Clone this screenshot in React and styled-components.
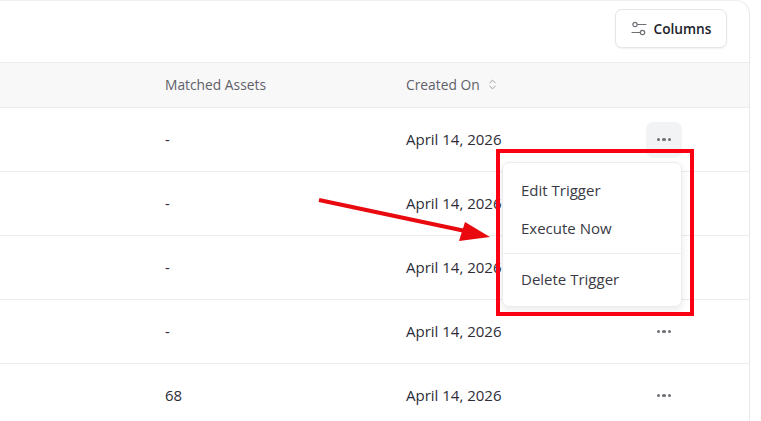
import React from "react";
import styled, { createGlobalStyle } from "styled-components";
import { ChevronsUpDown } from "lucide-react";

const GlobalStyle = createGlobalStyle`
  html, body {
    margin: 0;
    background: #fff;
    overflow: hidden;
  }
  body {
    font-family: "Open Sans", "Noto Sans", "Liberation Sans", sans-serif;
  }
`;

const Page = styled.div`
  position: relative;
  width: 761px;
  height: 421px;
  overflow: hidden;
`;

//Table card, cut off by the window on the left and bottom
const Card = styled.div`
  box-sizing: border-box;
  width: 750px;
  height: 421px;
  background: #fff;
  border-right: 1px solid #e9e9eb;
  border-top-right-radius: 14px;
  box-shadow: inset 0 1px 0 #f0f0f1;
`;

const Toolbar = styled.div`
  box-sizing: border-box;
  height: 63px;
  display: flex;
  justify-content: flex-end;
  align-items: flex-start;
  padding: 9px 22px 0 0;
  border-bottom: 1px solid #ececee;
`;

const ColumnsButton = styled.button`
  box-sizing: border-box;
  width: 112px;
  height: 39px;
  display: flex;
  align-items: center;
  justify-content: center;
  gap: 7px;
  background: #fff;
  border: 1px solid #e6e6e8;
  border-radius: 7px;
  box-shadow: 0 1px 2px rgba(20, 20, 30, 0.06);
  color: #1d1d2b;
  font: 600 13.7px "Open Sans", sans-serif;
  padding: 0;
`;

const Row = styled.div`
  box-sizing: border-box;
  display: grid;
  grid-template-columns: 165px 241px 1fr 102px;
  align-items: center;
  height: ${(props) => (props.$header ? "45px" : "64px")};
  background: ${(props) => (props.$header ? "#f8f8f9" : "#fff")};
  border-bottom: 1px solid #ececee;
`;

const Cell = styled.div`
  grid-column: ${(props) => props.$col};
  padding-bottom: 2px;
  color: #2d2d39;
  font-size: 15px;
  white-space: nowrap;
`;

const HeadCell = styled(Cell)`
  display: flex;
  align-items: center;
  gap: 6px;
  color: #5f6068;
  font-size: 13.8px;
`;

const ActionButton = styled.div`
  width: 36px;
  height: 36px;
  margin-left: -1px;
  display: flex;
  align-items: center;
  justify-content: center;
  gap: 2px;
  border-radius: 7px;
  background: ${(props) => (props.$active ? "#f2f3f5" : "transparent")};
`;

const Dot = styled.span`
  width: 3.5px;
  height: 3.5px;
  border-radius: 50%;
  background: #6d6e75;
`;

//Open row menu
const Menu = styled.div`
  position: absolute;
  left: 502px;
  top: 162px;
  box-sizing: border-box;
  width: 180px;
  height: 145px;
  padding-top: 8px;
  background: #fff;
  border: 1px solid #ececee;
  border-radius: 7px;
  box-shadow: 0 3px 8px rgba(20, 20, 30, 0.09);
`;

const MenuItem = styled.div`
  height: 38px;
  padding-left: 18px;
  display: flex;
  align-items: center;
  color: #3a3a45;
  font-size: 15px;
`;

const MenuDivider = styled.div`
  height: 1px;
  margin: 6px 0 6px;
  background: #ececee;
`;

//Red annotation drawn on the screenshot
const Highlight = styled.div`
  position: absolute;
  left: 496px;
  top: 149px;
  box-sizing: border-box;
  width: 198px;
  height: 167px;
  border: 4px solid #fb0012;
`;

const Arrow = styled.svg`
  position: absolute;
  left: 310px;
  top: 190px;
`;

const SlidersIcon = () => (
  <svg width="16" height="16" viewBox="0 0 16 16" fill="none" stroke="#6f7076" strokeWidth="1.2">
    <circle cx="4" cy="3.5" r="2.2" />
    <path d="M6.4 3.5H15" strokeLinecap="round" />
    <circle cx="11.5" cy="11.5" r="2.2" />
    <path d="M1 11.5H9" strokeLinecap="round" />
  </svg>
);

const Dots = () => (
  <>
    <Dot />
    <Dot />
    <Dot />
  </>
);

const rows = ["-", "-", "-", "-", "68"];

export default function App() {
  return (
    <Page>
      <GlobalStyle />
      <Card>
        <Toolbar>
          <ColumnsButton>
            <SlidersIcon />
            Columns
          </ColumnsButton>
        </Toolbar>
        <Row $header>
          <HeadCell $col={2}>Matched Assets</HeadCell>
          <HeadCell $col={3}>
            Created On
            <ChevronsUpDown size={13} color="#8b8c92" strokeWidth={1.6} />
          </HeadCell>
        </Row>
        {rows.map((matched, i) => (
          <Row key={i}>
            <Cell $col={2}>{matched}</Cell>
            <Cell $col={3}>April 14, 2026</Cell>
            <ActionButton $active={i === 0}>
              <Dots />
            </ActionButton>
          </Row>
        ))}
      </Card>
      <Arrow width="190" height="60" viewBox="0 0 190 60">
        <path d="M9 10 L160 42" stroke="#e80a0e" strokeWidth="4" />
        <path d="M180 47 L149 51 L155 32 Z" fill="#e80a0e" />
      </Arrow>
      <Menu>
        <MenuItem>Edit Trigger</MenuItem>
        <MenuItem>Execute Now</MenuItem>
        <MenuDivider />
        <MenuItem>Delete Trigger</MenuItem>
      </Menu>
      <Highlight />
    </Page>
  );
}
